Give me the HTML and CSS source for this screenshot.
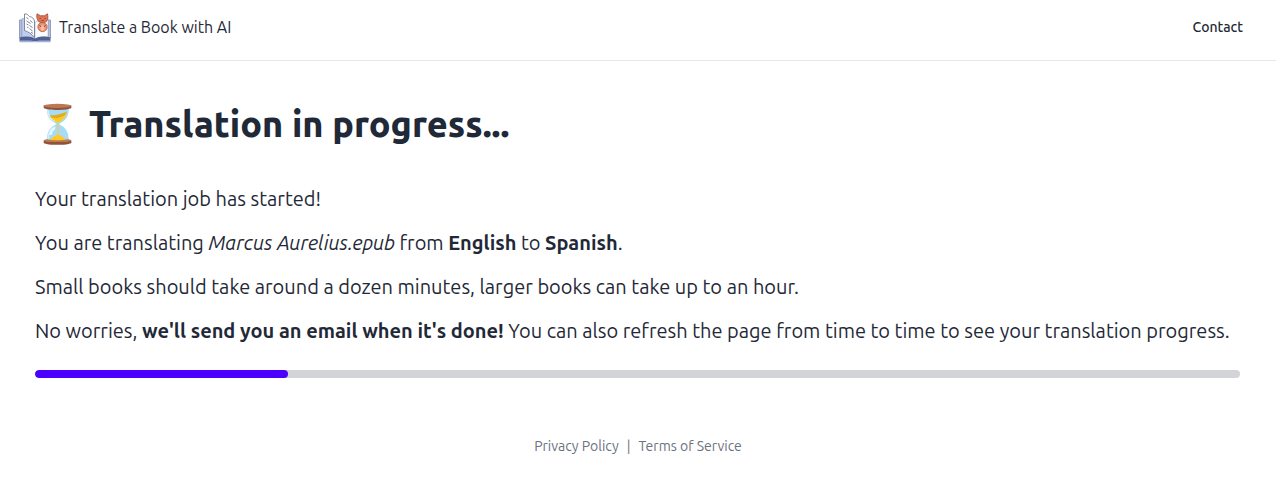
FILE: index.html
```html
<!DOCTYPE html>
<html lang="en">
  <head>
    <meta charset="UTF-8" />
    <meta name="viewport" content="width=device-width, initial-scale=1.0" />
    <title>Translate a Book with AI</title>
    <link rel="stylesheet" href="styles.css">
  </head>
  <body>
    <header class="navbar">
      <a class="brand" href="/">
        <svg class="brand-logo" viewBox="0 -3 32 34" aria-hidden="true">
          <path d="M.5 7H3v18H.5zM29 7h2.500v18H29z" fill="#b4c0e2" stroke="#858daa" stroke-width=".8" />
          <path d="M3 5.500c5 0 9 1 13 4V26c-3-2-8-3-13-2z" fill="#bfcdf0" stroke="#9aa3c2" stroke-width=".6" />
          <path d="M29 5.500c-5 0-9 1-13 4V26c3-2 8-3 13-2z" fill="#fbfbff" stroke="#a6aec8" stroke-width=".6" />
          <path d="M.5 24.500c6-2 12-1 15.500 1 3.500-2 9.500-3 15.500-1v3.500H.5z" fill="#4f6095" />
          <path d="M.5 27.500h11l4.500.7 4.500-.7h11v1.700H.5z" fill="#a3b0d4" />
          <path d="M5.500 1c2.500-.5 3.500 1 5 2.500 3 .5 5 2.500 5 5.500v15.500c-3-4-6-5.500-10-7z" fill="#fff" stroke="#747b94" stroke-width=".9" />
          <path d="M7.500 4.500l2 1.500M11 7.500l2.500 2M7.500 8l4 2.500M7.500 11l2 1M10.500 12.500l3 2M8 14l1.500.7M10.500 15.500l3 2.500M12 19l2 1.500" fill="none" stroke="#70768c" stroke-width=".9" />
          <circle cx="23.500" cy="14" r="4.600" fill="#ef9775" stroke="#b4604b" stroke-width=".9" />
          <path d="M18 .8l3.500 2h4l3-2c.5 3 .5 5-.5 7-2 2.500-7 2.500-9 0-1-2-1.500-4-1-7z" fill="#df7654" stroke="#a8523f" stroke-width=".9" />
          <ellipse cx="23.500" cy="15" rx="2" ry="2.700" fill="#ffbfa2" />
          <path d="M20.500 5.500h1.500M25.500 5.500h1.500M22.500 7.500h2.500M20.500 12l1.500 2M26.500 12l-1.500 2" fill="none" stroke="#8c4438" stroke-width=".9" />
        </svg>
        <span>Translate a Book with AI</span>
      </a>
      <nav>
        <a class="nav-link" href="/contact">Contact</a>
      </nav>
    </header>

    <main class="content">
      <h1 class="title">
        <svg class="hourglass" viewBox="0 -1 36 41" role="img" aria-label="Hourglass">
          <path d="M8 4c0 9 3 12 9.500 15.500C11 23 8 27 8 36h21.500c0-9-3-13-9.500-16.500C26.500 16 29.500 13 29.500 4z" fill="#a6dcf8" />
          <path d="M9 5c0 6 2 9 7 12M9.500 35c-.5-6 2-10 7-13" fill="none" stroke="#d6f0ff" stroke-width="1.500" />
          <path d="M11 12c5 1 11-1 16.500-4-.5 4.500-4 8-8 10v12c3 1 6 3 8 5.500-5 1-12 1-17 0 2-2.500 5-4.500 8-5.500V18c-3-1.500-6-3.500-7.500-6z" fill="#ffca28" />
          <path d="M11 11c6 0 10-1 16.500-3.500-1 5-10 7.500-15.500 5.500z" fill="#e5ab18" />
          <path d="M12 29c0-2 1-4 3-5" fill="none" stroke="#e9f8ff" stroke-width="2.500" stroke-linecap="round" />
          <path d="M5 1.500V4c4 2.500 23 2.500 27 0V1.500zM5 35.500V38c4 2.500 23 2.500 27 0v-2.500c-5 1.500-22 1.500-27 0z" fill="#8f5438" />
          <ellipse cx="18.500" cy="1.800" rx="13.500" ry="2" fill="#bd7752" />
          <path d="M5 35.500c1-1 3-1.200 4-1.200 5 1.500 14 1.500 19 0 1 0 3 .2 4 1.200-3 2.200-24 2.200-27 0z" fill="#bd7752" />
        </svg>
        <span>Translation in progress...</span>
      </h1>
      <div class="details">
        <p>Your translation job has started!</p>
        <p>You are translating <em>Marcus Aurelius.epub</em> from <strong>English</strong> to <strong>Spanish</strong>.</p>
        <p>Small books should take around a dozen minutes, larger books can take up to an hour.</p>
        <p>No worries, <strong>we'll send you an email when it's done!</strong> You can also refresh the page from time to time to see your translation progress.</p>
      </div>
      <progress class="progress" value="21" max="100" aria-label="Translation progress"></progress>
    </main>

    <footer class="footer">
      <a href="/privacy">Privacy Policy</a>
      <span>|</span>
      <a href="/terms">Terms of Service</a>
    </footer>
  </body>
</html>
```
FILE: styles.css
```css
* {
  margin: 0;
  padding: 0;
  box-sizing: border-box;
}

body {
  font-family: Ubuntu, "Noto Sans", sans-serif;
  font-weight: 400;
  background-color: #fff;
  color: #1f2937;
}

a {
  color: inherit;
  text-decoration: none;
}

.navbar {
  display: flex;
  justify-content: space-between;
  align-items: center;
  padding: 10px 33px 16px 19px;
  border-bottom: 1px solid #e5e7eb;
}

.brand {
  display: flex;
  align-items: center;
  gap: 8px;
  font-size: 16px;
  line-height: 32px;
}

.brand-logo {
  width: 32px;
  height: 34px;
}

.nav-link {
  display: block;
  font-size: 14px;
  font-weight: 500;
  line-height: 20px;
}

.content {
  padding: 40px 36px 0 35px;
}

.title {
  display: flex;
  align-items: center;
  gap: 10px;
  margin-bottom: 38px;
  font-size: 36px;
  font-weight: 800;
  line-height: 46px;
}

.hourglass {
  width: 44px;
  height: 42px;
}

.details {
  display: flex;
  flex-direction: column;
  gap: 16px;
  font-size: 20px;
  line-height: 28px;
}

.details strong {
  font-weight: 600;
}

.progress {
  display: block;
  width: 100%;
  height: 8px;
  margin-top: 25px;
  appearance: none;
  border: none;
  border-radius: 4px;
  background-color: #d2d4d7;
  overflow: hidden;
}

.progress::-webkit-progress-bar {
  background-color: #d2d4d7;
}

.progress::-webkit-progress-value {
  border-radius: 4px;
  background-color: #4b00ff;
}

.footer {
  display: flex;
  justify-content: center;
  gap: 8px;
  padding: 56px 0 36px;
  font-size: 14px;
  line-height: 24px;
  color: #6b7280;
}
```
